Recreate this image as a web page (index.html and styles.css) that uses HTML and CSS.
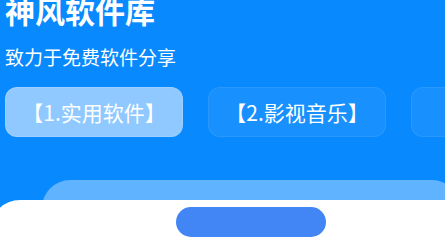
FILE: index.html
```html
<!DOCTYPE html>
<html lang="zh-CN">
<head>
<meta charset="utf-8">
<title>神风软件库</title>
<link rel="stylesheet" href="styles.css">
</head>
<body>
<div class="page">
  <header class="hero">
    <h1 class="title">神风软件库</h1>
    <p class="subtitle">致力于免费软件分享</p>
    <nav class="tabs">
      <a class="tab tab-active">【1.实用软件】</a>
      <a class="tab">【2.影视音乐】</a>
      <a class="tab">【3.其他】</a>
    </nav>
  </header>
  <div class="card"></div>
  <section class="sheet">
    <div class="pill"></div>
  </section>
</div>
</body>
</html>
```

FILE: styles.css
```css
html, body {
  margin: 0;
  padding: 0;
}
body {
  background: #0889fe;
  font-family: "Noto Sans CJK SC", "Noto Sans", sans-serif;
  color: #ffffff;
  overflow: hidden;
  height: 244px;
}
.page {
  width: 445px;
  overflow: hidden;
  height: 244px;
}
.hero {
  padding-left: 5px;
}
.title {
  margin: -5px 0 0 0;
  font-size: 30px;
  line-height: 30px;
  font-weight: 700;
}
.subtitle {
  margin: 19px 0 0 0;
  font-size: 19px;
  line-height: 26px;
  font-weight: 400;
}
.tabs {
  display: flex;
  gap: 25px;
  margin-top: 17px;
  white-space: nowrap;
}
.tab {
  flex: 0 0 178px;
  height: 50px;
  box-sizing: border-box;
  border-radius: 12px;
  display: flex;
  align-items: center;
  justify-content: center;
  font-size: 21px;
  color: #ffffff;
  background: #1891ff;
  border: 1px solid rgba(255, 255, 255, 0.08);
}
.tab-active {
  background: #8fc9ff;
  border-color: rgba(255, 255, 255, 0.15);
}
.card {
  margin: 43px -15px 0 42px;
  height: 40px;
  background: #5fb3ff;
  border-radius: 28px 28px 0 0;
}
.sheet {
  position: relative;
  margin: -20px -40px 0 -10px;
  height: 60px;
  background: #ffffff;
  border-radius: 30px 30px 0 0;
  padding: 7px 0 0 186px;
  box-sizing: border-box;
}
.pill {
  width: 150px;
  height: 30px;
  border-radius: 15px;
  background: #4285f4;
}
```
